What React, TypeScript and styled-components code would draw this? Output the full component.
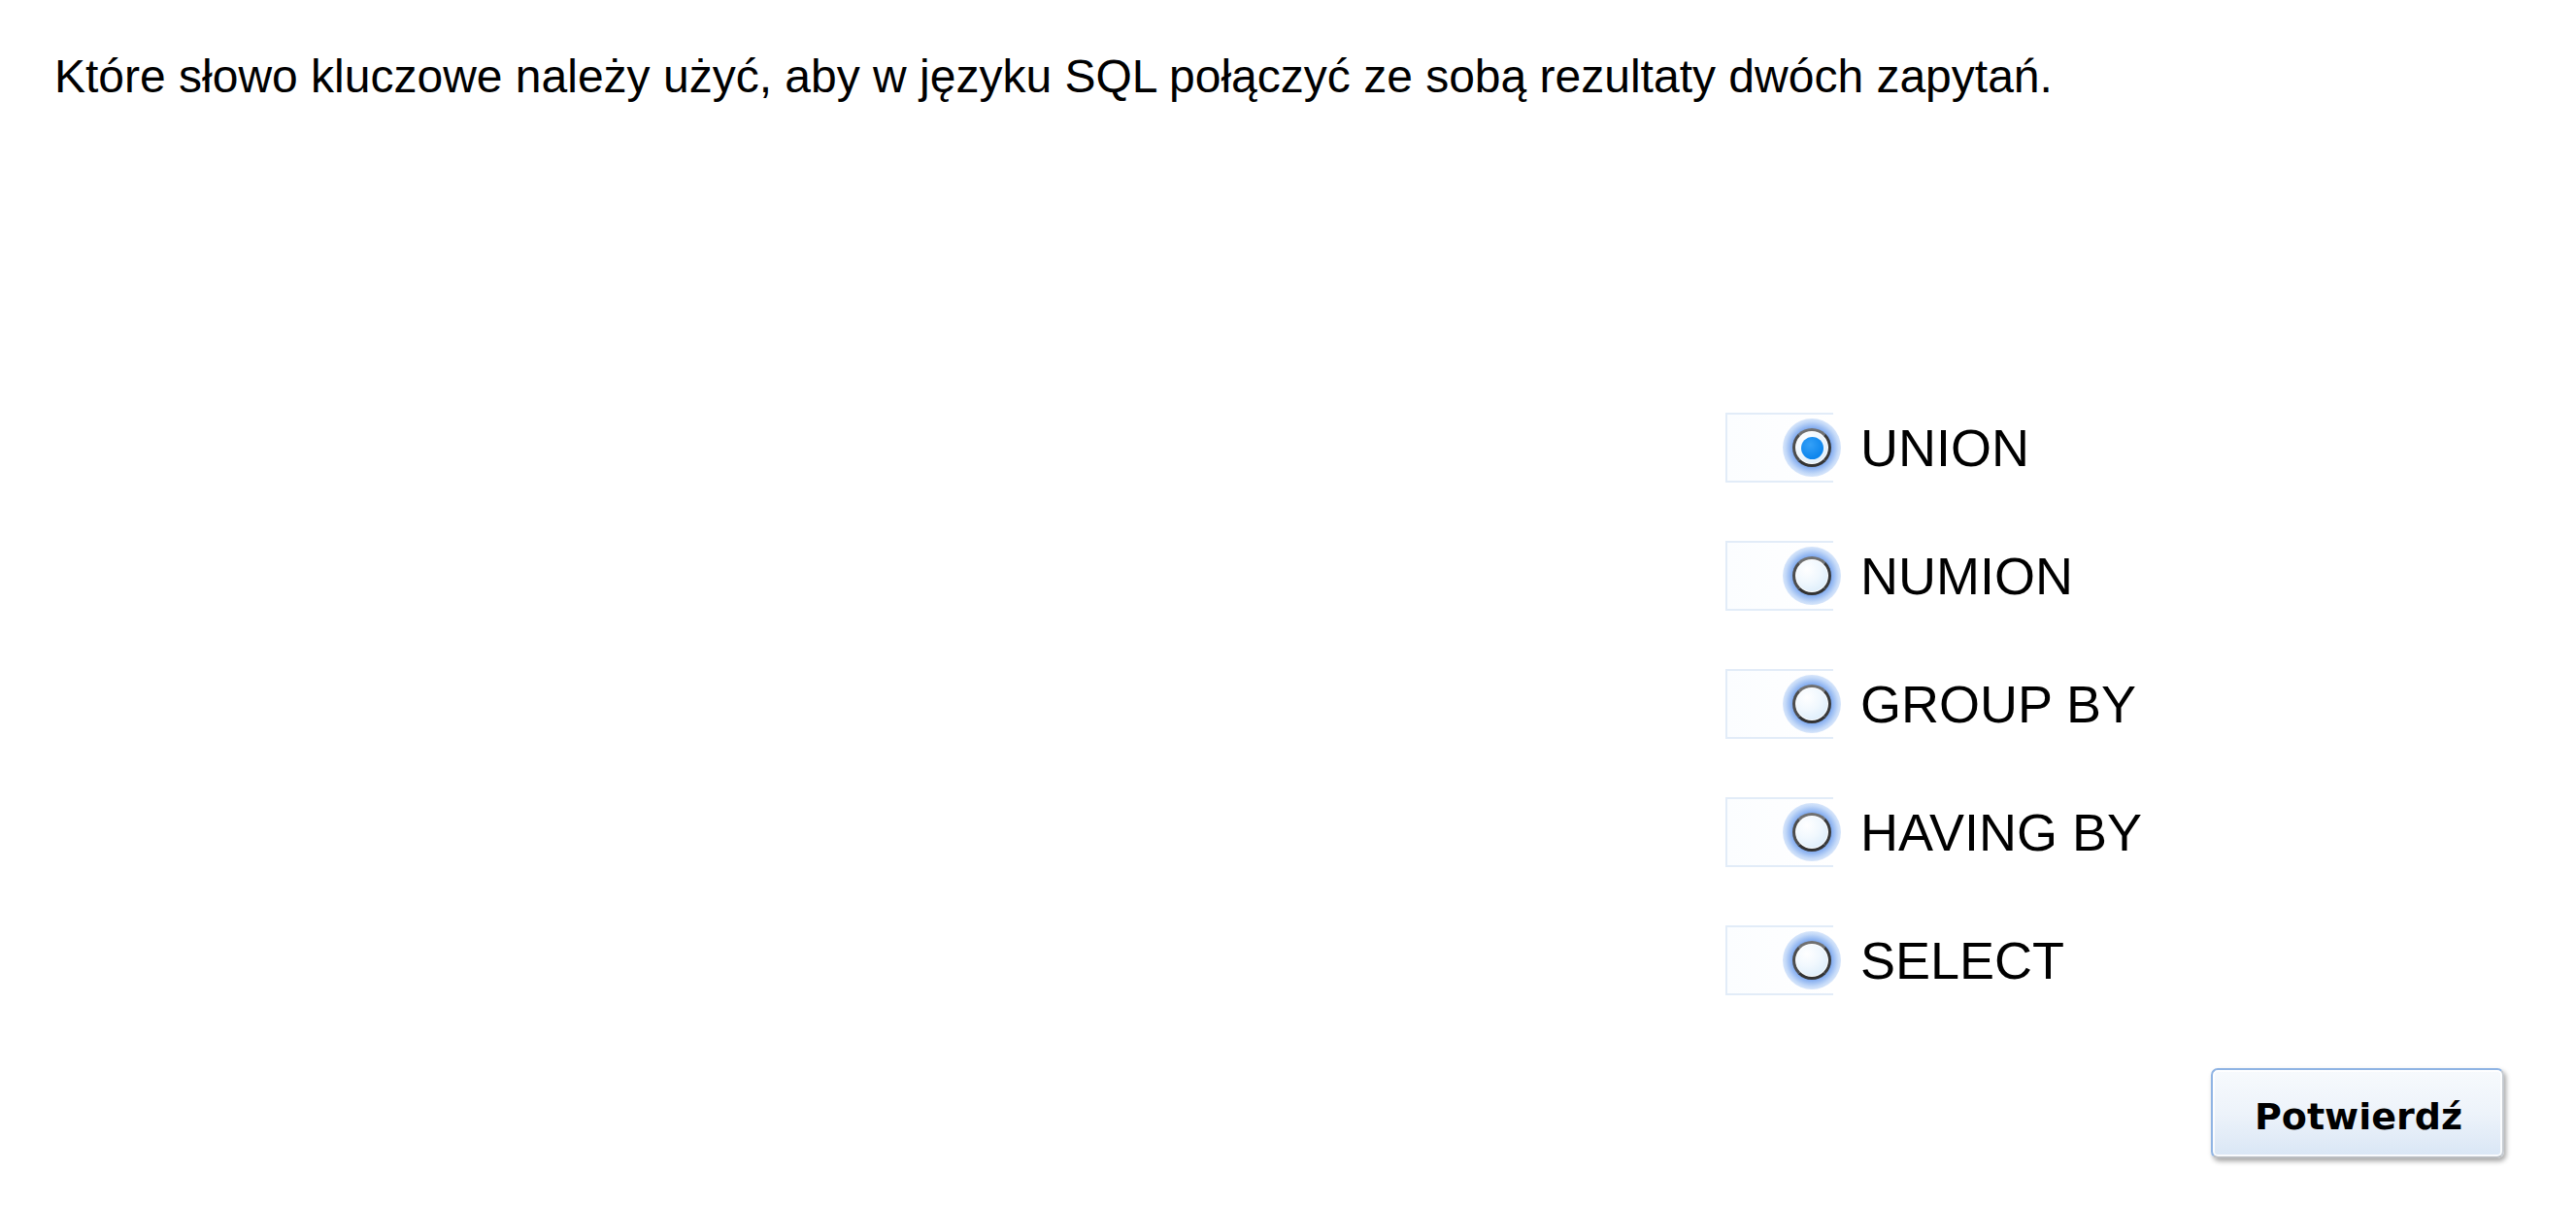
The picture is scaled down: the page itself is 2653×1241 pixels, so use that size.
import React from "react";
import styled, { createGlobalStyle } from "styled-components";

const GlobalStyle = createGlobalStyle`
  html, body { margin: 0; padding: 0; background: #ffffff; }
  body { font-family: "Liberation Sans", Arial, sans-serif; color: #000; }
`;

const Page = styled.div`
  width: 2653px;
  height: 1241px;
  box-sizing: border-box;
  display: flex;
  flex-direction: column;
  padding-top: 55px;
  overflow: hidden;
`;

const Question = styled.div`
  font-family: "Liberation Sans", Arial, sans-serif;
  font-size: 48px;
  line-height: 1;
  padding-left: 56px;
  white-space: nowrap;
`;

const Options = styled.div`
  display: flex;
  flex-direction: column;
  gap: 60px;
  margin-top: 322px;
  margin-left: 1777px;
`;

const Row = styled.label`
  display: flex;
  align-items: center;
`;

const Frame = styled.div`
  width: 109px;
  height: 68px;
  border: 2px solid #e2ecf8;
  border-right: none;
  display: flex;
  align-items: center;
  justify-content: flex-end;
  box-sizing: content-box;
  background: linear-gradient(90deg, #fbfdff, #ffffff);
`;

const Glow = styled.span`
  width: 60px;
  height: 60px;
  margin-right: -8px;
  border-radius: 50%;
  display: flex;
  align-items: center;
  justify-content: center;
  background: radial-gradient(circle, rgba(120, 165, 238, 0.9) 48%, rgba(140, 182, 242, 0.5) 64%, rgba(190, 212, 248, 0.15) 82%, rgba(220, 232, 252, 0) 100%);
`;

const Ring = styled.span`
  width: 34px;
  height: 34px;
  border-radius: 50%;
  border: 3px solid #333;
  border-top-color: #707070;
  border-left-color: #4d4d4d;
  border-right-color: #3a3a3a;
  display: flex;
  align-items: center;
  justify-content: center;
  background: radial-gradient(circle at 35% 30%, #ffffff 0%, #f1f8fe 40%, #d2e8f9 100%);
  box-shadow: inset 0 0 0 1px #ffffff;
`;

const Dot = styled.span`
  width: 23px;
  height: 23px;
  border-radius: 50%;
  background: radial-gradient(circle at 40% 35%, #35a0f7, #0d86ed 70%);
`;

const Label = styled.span`
  font-family: "Liberation Sans", Arial, sans-serif;
  font-size: 54px;
  line-height: 1;
  margin-left: 28px;
  white-space: nowrap;
`;

const Footer = styled.div`
  display: flex;
  justify-content: flex-end;
  padding-right: 74px;
  margin-top: 75px;
`;

const Button = styled.button`
  width: 302px;
  height: 93px;
  box-sizing: border-box;
  border-radius: 7px;
  border: 2px solid;
  border-color: #8fb4e4 #c4c9cf #b9bcc0 #8fb4e4;
  background: linear-gradient(180deg, #f7fafd 0%, #edf3fa 50%, #d9e6f5 100%);
  box-shadow: 2px 3px 5px rgba(0, 0, 0, 0.35), inset 0 0 0 2px rgba(255, 255, 255, 0.8);
  font-family: "DejaVu Sans", Verdana, sans-serif;
  font-weight: bold;
  font-size: 38px;
  color: #000;
  padding: 6px 0 0 2px;
  cursor: pointer;
`;

const options = ["UNION", "NUMION", "GROUP BY", "HAVING BY", "SELECT"];

export default function App() {
  const selected = 0;
  return (
    <>
      <GlobalStyle />
      <Page>
        <Question>
          Które słowo kluczowe należy użyć, aby w języku SQL połączyć ze sobą rezultaty dwóch zapytań.
        </Question>
        <Options>
          {options.map((opt, i) => (
            <Row key={opt}>
              <Frame>
                <Glow>
                  <Ring>{i === selected && <Dot />}</Ring>
                </Glow>
              </Frame>
              <Label>{opt}</Label>
            </Row>
          ))}
        </Options>
        <Footer>
          <Button>Potwierdź</Button>
        </Footer>
      </Page>
    </>
  );
}
